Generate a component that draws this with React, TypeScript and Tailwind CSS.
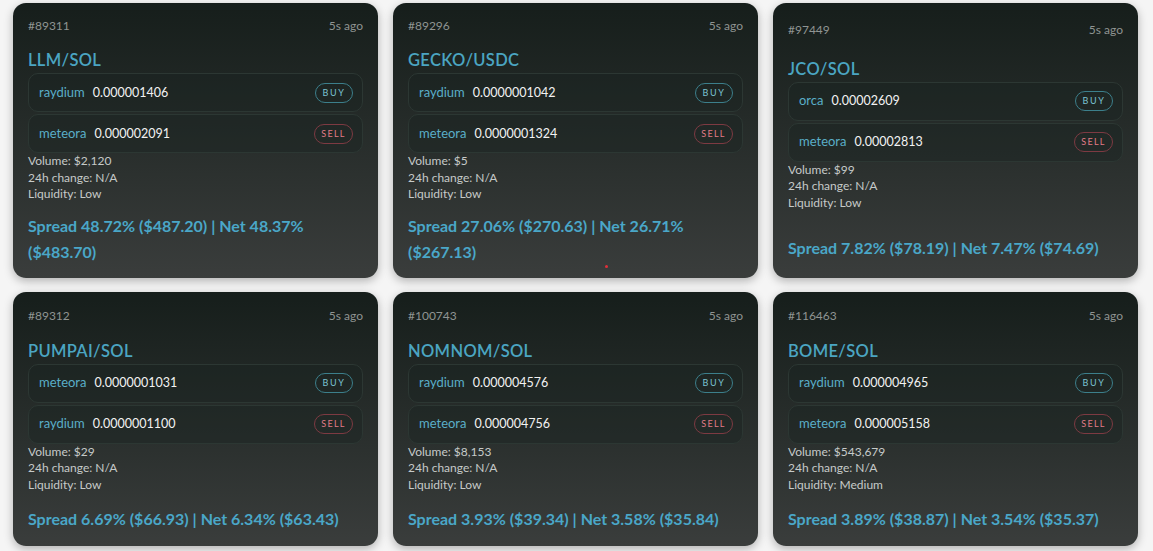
type Leg = { dex: string; price: string };

type Opportunity = {
  id: string;
  pair: string;
  buy: Leg;
  sell: Leg;
  volume: string;
  liquidity: string;
  spread: string;
  dot?: boolean;
};

const opportunities: Opportunity[] = [
  {
    id: "#89311",
    pair: "LLM/SOL",
    buy: { dex: "raydium", price: "0.000001406" },
    sell: { dex: "meteora", price: "0.000002091" },
    volume: "$2,120",
    liquidity: "Low",
    spread: "Spread 48.72% ($487.20) | Net 48.37% ($483.70)",
  },
  {
    id: "#89296",
    pair: "GECKO/USDC",
    buy: { dex: "raydium", price: "0.0000001042" },
    sell: { dex: "meteora", price: "0.0000001324" },
    volume: "$5",
    liquidity: "Low",
    spread: "Spread 27.06% ($270.63) | Net 26.71% ($267.13)",
    dot: true,
  },
  {
    id: "#97449",
    pair: "JCO/SOL",
    buy: { dex: "orca", price: "0.00002609" },
    sell: { dex: "meteora", price: "0.00002813" },
    volume: "$99",
    liquidity: "Low",
    spread: "Spread 7.82% ($78.19) | Net 7.47% ($74.69)",
  },
  {
    id: "#89312",
    pair: "PUMPAI/SOL",
    buy: { dex: "meteora", price: "0.0000001031" },
    sell: { dex: "raydium", price: "0.0000001100" },
    volume: "$29",
    liquidity: "Low",
    spread: "Spread 6.69% ($66.93) | Net 6.34% ($63.43)",
  },
  {
    id: "#100743",
    pair: "NOMNOM/SOL",
    buy: { dex: "raydium", price: "0.000004576" },
    sell: { dex: "meteora", price: "0.000004756" },
    volume: "$8,153",
    liquidity: "Low",
    spread: "Spread 3.93% ($39.34) | Net 3.58% ($35.84)",
  },
  {
    id: "#116463",
    pair: "BOME/SOL",
    buy: { dex: "raydium", price: "0.000004965" },
    sell: { dex: "meteora", price: "0.000005158" },
    volume: "$543,679",
    liquidity: "Medium",
    spread: "Spread 3.89% ($38.87) | Net 3.54% ($35.37)",
  },
];

const LegRow = ({ leg, side }: { leg: Leg; side: "buy" | "sell" }) => (
  <div className="flex h-[39px] items-center justify-between rounded-[10px] border border-[#2c3733] bg-[#1a2320]/40 pl-[10px] pr-[9px]">
    <div className="flex items-baseline gap-[8px]">
      <span className="text-[13px] text-[#5aaec8]">{leg.dex}</span>
      <span className="text-[12.5px] text-[#f2f2f2]">{leg.price}</span>
    </div>
    {side === "buy" ? (
      <span className="flex h-[20px] w-[38px] items-center justify-center rounded-full border border-[#3c7f8b] text-[9px] tracking-[0.18em] text-[#7cc4d4]">
        BUY
      </span>
    ) : (
      <span className="flex h-[20px] w-[39px] items-center justify-center rounded-full border border-[#7d3a42] text-[9px] tracking-[0.14em] text-[#e07b87]">
        SELL
      </span>
    )}
  </div>
);

const Card = ({ op }: { op: Opportunity }) => (
  <div className="relative flex min-h-[254px] flex-col rounded-[13px] bg-gradient-to-b from-[#161e1b] to-[#3a3d3c] px-[15px] pb-[13px] pt-[15px] shadow-[0_3px_10px_rgba(0,0,0,0.28)]">
    <div className="grow" />
    <div className="flex h-[16px] items-center justify-between text-[12px] text-[#8f9492]">
      <span>{op.id}</span>
      <span>5s ago</span>
    </div>
    <div className="grow" />
    <div className="mt-[14px] text-[16.5px] font-semibold leading-[24px] tracking-[0.02em] text-[#4ba5c2]">
      {op.pair}
    </div>
    <div className="mt-[1px] flex flex-col gap-[2px]">
      <LegRow leg={op.buy} side="buy" />
      <LegRow leg={op.sell} side="sell" />
    </div>
    <div className="text-[12px] leading-[16.7px] text-[#c6cac9]">
      <div>Volume: {op.volume}</div>
      <div>24h change: N/A</div>
      <div>Liquidity: {op.liquidity}</div>
    </div>
    <div className="grow-[3]" />
    <div className="mt-[10px] text-[16px] font-bold leading-[26px] text-[#4aa7c8]">
      {op.spread}
    </div>
    <div className="grow" />
    {op.dot && (
      <span className="absolute left-[212px] top-[262px] h-[3px] w-[3px] rounded-full bg-[#e0303a]" />
    )}
  </div>
);

export default function App() {
  return (
    <div
      className="min-h-screen bg-[#f5f5f5] pb-[6px] pl-[13px] pr-[15px] pt-[3px]"
      style={{ fontFamily: "Lato, 'Open Sans', sans-serif" }}
    >
      <div className="grid grid-cols-3 gap-x-[15px] gap-y-[14px]">
        {opportunities.map((op) => (
          <Card key={op.id} op={op} />
        ))}
      </div>
    </div>
  );
}
